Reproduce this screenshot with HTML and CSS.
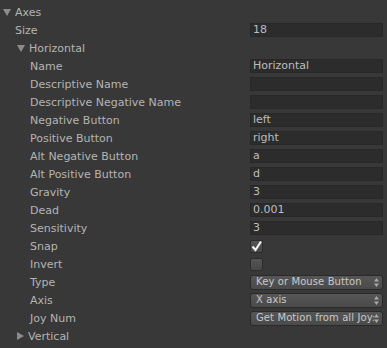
FILE: index.html
```html
<!DOCTYPE html>
<html>
<head>
  <title>Input Manager</title>
  <link rel="stylesheet" href="styles.css">
</head>

<body>
  <div class="inspector">
    <div class="row">
      <div class="label lvl0"><svg class="fold" width="8" height="7" viewBox="0 0 8 7"><path d="M0 0H8L4 7Z"/></svg>Axes</div>
    </div>
    <div class="row">
      <div class="label lvl1">Size</div>
      <div class="field text">18</div>
    </div>
    <div class="row">
      <div class="label lvl1b"><svg class="fold" width="8" height="7" viewBox="0 0 8 7"><path d="M0 0H8L4 7Z"/></svg>Horizontal</div>
    </div>
    <div class="row">
      <div class="label lvl2">Name</div>
      <div class="field text">Horizontal</div>
    </div>
    <div class="row">
      <div class="label lvl2">Descriptive Name</div>
      <div class="field text"></div>
    </div>
    <div class="row">
      <div class="label lvl2">Descriptive Negative Name</div>
      <div class="field text"></div>
    </div>
    <div class="row">
      <div class="label lvl2">Negative Button</div>
      <div class="field text">left</div>
    </div>
    <div class="row">
      <div class="label lvl2">Positive Button</div>
      <div class="field text">right</div>
    </div>
    <div class="row">
      <div class="label lvl2">Alt Negative Button</div>
      <div class="field text">a</div>
    </div>
    <div class="row">
      <div class="label lvl2">Alt Positive Button</div>
      <div class="field text">d</div>
    </div>
    <div class="row">
      <div class="label lvl2">Gravity</div>
      <div class="field text">3</div>
    </div>
    <div class="row">
      <div class="label lvl2">Dead</div>
      <div class="field text">0.001</div>
    </div>
    <div class="row">
      <div class="label lvl2">Sensitivity</div>
      <div class="field text">3</div>
    </div>
    <div class="row">
      <div class="label lvl2">Snap</div>
      <div class="check"><svg width="13" height="13" viewBox="0 0 13 13"><path d="M2.5 6.5L5.5 10L11 1.5" fill="none" stroke="#f0f0f0" stroke-width="2.2"/></svg></div>
    </div>
    <div class="row">
      <div class="label lvl2">Invert</div>
      <div class="check"></div>
    </div>
    <div class="row">
      <div class="label lvl2">Type</div>
      <div class="field popup"><span>Key or Mouse Button</span><svg class="arrows" width="5" height="9" viewBox="0 0 5 9"><path d="M0 3.5L2.5 0L5 3.5ZM0 5.5H5L2.5 9Z"/></svg></div>
    </div>
    <div class="row">
      <div class="label lvl2">Axis</div>
      <div class="field popup"><span>X axis</span><svg class="arrows" width="5" height="9" viewBox="0 0 5 9"><path d="M0 3.5L2.5 0L5 3.5ZM0 5.5H5L2.5 9Z"/></svg></div>
    </div>
    <div class="row">
      <div class="label lvl2">Joy Num</div>
      <div class="field popup"><span>Get Motion from all Joy:</span><svg class="arrows" width="5" height="9" viewBox="0 0 5 9"><path d="M0 3.5L2.5 0L5 3.5ZM0 5.5H5L2.5 9Z"/></svg></div>
    </div>
    <div class="row">
      <div class="label lvl1b"><svg class="fold" width="7" height="8" viewBox="0 0 7 8"><path d="M0 0L7 4L0 8Z"/></svg>Vertical</div>
    </div>
  </div>
</body>
</html>
```

FILE: styles.css
```css
body {margin: 0; background-color: #383838; font-family: 'DejaVu Sans', sans-serif; font-size: 11px; color: #b4b4b4;}
.inspector {padding-top: 3px;}
.row {display: flex; align-items: center; height: 18px;}
.label {flex: 0 0 250px; box-sizing: border-box; display: flex; align-items: center; white-space: nowrap;}
.lvl0 {padding-left: 3px;}
.lvl1 {padding-left: 15px;}
.lvl1b {padding-left: 17px;}
.lvl2 {padding-left: 30px;}
.fold {fill: #8c8c8c; margin-right: 4px;}
.field {width: 133px; box-sizing: border-box; height: 14px; line-height: 12px; white-space: nowrap; overflow: hidden;}
.text {background-color: #2c2c2c; border: 1px solid #282828; padding-left: 2px; color: #bdbdbd;}
.popup {display: flex; align-items: center; justify-content: space-between; height: 15px; padding: 0 3px 0 5px; border-radius: 3px; border: 1px solid #2a2a2a; background: linear-gradient(#565656, #4a4a4a); color: #c8c8c8; font-size: 10px; letter-spacing: 0.1px;}
.popup span {overflow: hidden;}
.arrows {flex: 0 0 auto; fill: #a8a8a8;}
.check {width: 13px; height: 13px; border-radius: 2px; background: linear-gradient(#555555, #474747); border: 1px solid #2c2c2c; box-sizing: border-box;}
.check svg {display: block; margin: -1px;}
```
